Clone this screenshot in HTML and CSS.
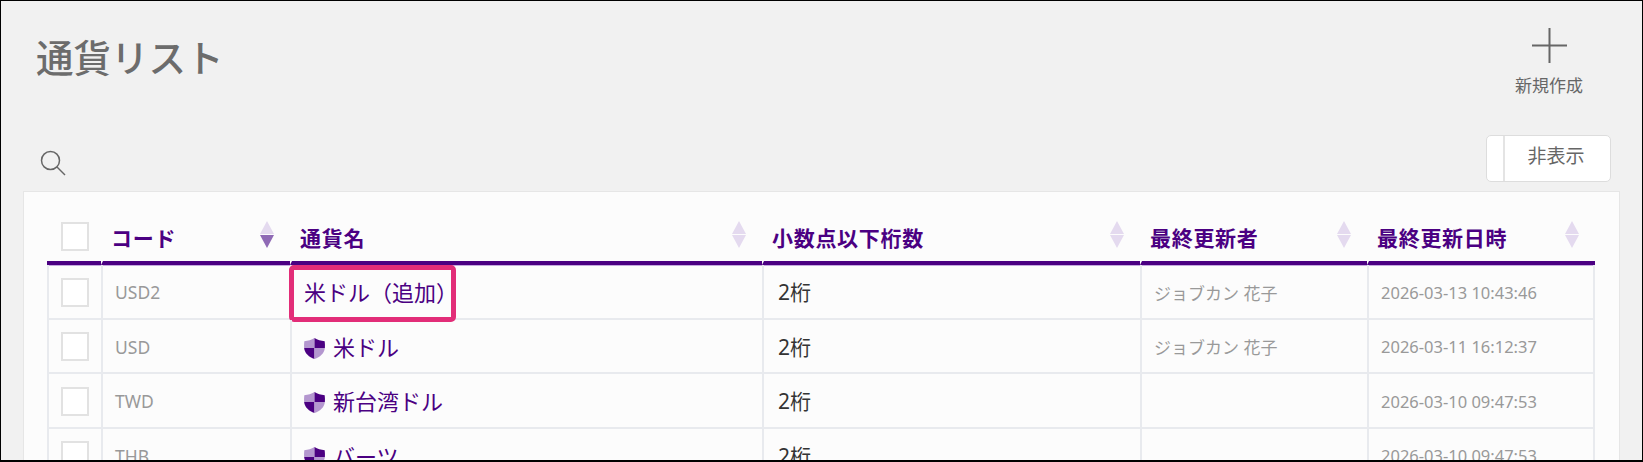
FILE: index.html
```html
<!DOCTYPE html>
<html lang="ja">
<head>
    <meta charset="utf-8">
    <title>通貨リスト</title>
    <link rel="stylesheet" href="styles.css">
</head>
<body>
<div class="frame">
    <header class="page-head">
        <h1 class="page-title">通貨リスト</h1>
        <a class="new-btn">
            <svg class="new-icon" width="35" height="35" viewBox="0 0 35 35"><path d="M17.5 0V35M0 17.5H35" fill="none" stroke="#666" stroke-width="2"/></svg>
            <span>新規作成</span>
        </a>
    </header>

    <div class="toolbar">
        <svg class="search-icon" width="26" height="26" viewBox="0 0 26 26"><circle cx="10.5" cy="10.5" r="9" fill="none" stroke="#666" stroke-width="1.5"/><path d="M17 17L25 25" fill="none" stroke="#666" stroke-width="1.5"/></svg>
        <div class="toggle-btn">
            <span class="toggle-knob"></span>
            <span class="toggle-text">非表示</span>
        </div>
    </div>

    <div class="card">
        <table class="list">
            <colgroup>
                <col class="col-check">
                <col class="col-code">
                <col class="col-name">
                <col class="col-digit">
                <col class="col-user">
                <col class="col-date">
            </colgroup>
            <thead>
            <tr>
                <th class="check-cell"><span class="checkbox"></span></th>
                <th><div class="th-in"><span>コード</span><span class="sort sort-asc"></span></div></th>
                <th><div class="th-in"><span>通貨名</span><span class="sort"></span></div></th>
                <th><div class="th-in"><span>小数点以下桁数</span><span class="sort"></span></div></th>
                <th><div class="th-in"><span>最終更新者</span><span class="sort"></span></div></th>
                <th><div class="th-in"><span>最終更新日時</span><span class="sort"></span></div></th>
            </tr>
            </thead>
            <tbody>
            <tr>
                <td class="check-cell"><span class="checkbox"></span></td>
                <td class="muted code">USD2</td>
                <td class="name"><span class="mark-box"></span>米ドル（追加）</td>
                <td class="digit">2桁</td>
                <td class="muted">ジョブカン 花子</td>
                <td class="muted date">2026-03-13 10:43:46</td>
            </tr>
            <tr>
                <td class="check-cell"><span class="checkbox"></span></td>
                <td class="muted code">USD</td>
                <td class="name"><svg class="shield" width="21" height="21" viewBox="0 0 21 23" preserveAspectRatio="none"><path d="M10.500 0C7.500 2 4 3.200 .3 3.500C0 6 0 8.500 .1 11H10.500Z" fill="#b497cf"/><path d="M10.500 0C13.500 2 17 3.200 20.700 3.500C21 6 21 8.500 20.900 11H10.500Z" fill="#4b0082"/><path d="M.1 11H10.500V23C5 21 .8 17 .1 11Z" fill="#4b0082"/><path d="M20.900 11H10.500V23C16 21 20.200 17 20.900 11Z" fill="#b497cf"/></svg>米ドル</td>
                <td class="digit">2桁</td>
                <td class="muted">ジョブカン 花子</td>
                <td class="muted date">2026-03-11 16:12:37</td>
            </tr>
            <tr>
                <td class="check-cell"><span class="checkbox"></span></td>
                <td class="muted code">TWD</td>
                <td class="name"><svg class="shield" width="21" height="21" viewBox="0 0 21 23" preserveAspectRatio="none"><path d="M10.500 0C7.500 2 4 3.200 .3 3.500C0 6 0 8.500 .1 11H10.500Z" fill="#b497cf"/><path d="M10.500 0C13.500 2 17 3.200 20.700 3.500C21 6 21 8.500 20.900 11H10.500Z" fill="#4b0082"/><path d="M.1 11H10.500V23C5 21 .8 17 .1 11Z" fill="#4b0082"/><path d="M20.900 11H10.500V23C16 21 20.200 17 20.900 11Z" fill="#b497cf"/></svg>新台湾ドル</td>
                <td class="digit">2桁</td>
                <td class="muted"></td>
                <td class="muted date">2026-03-10 09:47:53</td>
            </tr>
            <tr>
                <td class="check-cell"><span class="checkbox"></span></td>
                <td class="muted code">THB</td>
                <td class="name"><svg class="shield" width="21" height="21" viewBox="0 0 21 23" preserveAspectRatio="none"><path d="M10.500 0C7.500 2 4 3.200 .3 3.500C0 6 0 8.500 .1 11H10.500Z" fill="#b497cf"/><path d="M10.500 0C13.500 2 17 3.200 20.700 3.500C21 6 21 8.500 20.900 11H10.500Z" fill="#4b0082"/><path d="M.1 11H10.500V23C5 21 .8 17 .1 11Z" fill="#4b0082"/><path d="M20.900 11H10.500V23C16 21 20.200 17 20.900 11Z" fill="#b497cf"/></svg>バーツ</td>
                <td class="digit">2桁</td>
                <td class="muted"></td>
                <td class="muted date">2026-03-10 09:47:53</td>
            </tr>
            </tbody>
        </table>
    </div>
</div>
</body>
</html>
```

FILE: styles.css
```css
*{
    padding: 0;
    margin: 0;
    box-sizing: border-box;
}

html,body{
    height: 100%;
    overflow: hidden;
}

body{
    font-family: "Noto Sans", "Noto Sans CJK JP", sans-serif;
    color: #333;
    text-spacing-trim: space-all;
}

.frame{
    height: 462px;
    overflow: hidden;
    background-color: #f1f1f1;
    border: 1px solid #000;
    border-bottom-width: 2px;
}

.page-head{
    display: flex;
    justify-content: space-between;
    align-items: flex-start;
    height: 134px;
    padding-left: 35px;
}

.page-title{
    margin-top: 27px;
    font-size: 37.500px;
    font-weight: 500;
    line-height: 60px;
    color: #6c6c6c;
}

.new-btn{
    display: flex;
    flex-direction: column;
    align-items: center;
    width: 70px;
    margin: 27px 58px 0 0;
    font-size: 17px;
    line-height: 24px;
    color: #666;
}

.new-icon{
    margin-bottom: 11px;
}

.toolbar{
    display: flex;
    justify-content: space-between;
    align-items: flex-start;
    height: 56px;
    padding: 0 31px 0 39px;
}

.search-icon{
    margin-top: 15px;
}

.toggle-btn{
    display: flex;
    width: 125px;
    height: 47px;
    background-color: #fff;
    border: 1px solid #ddd;
    border-radius: 5px;
}

.toggle-knob{
    width: 18px;
    border-right: 2px solid #e4e4e4;
}

.toggle-text{
    flex: 1;
    text-align: center;
    font-size: 19px;
    line-height: 41px;
    color: #666;
    padding-right: 3px;
}

.card{
    width: 1597px;
    height: 300px;
    margin-left: 22px;
    padding: 16px 24px 0;
    background-color: #fcfcfc;
    border: 1px solid #e6e6e6;
}

.list{
    width: 1548px;
    margin-left: -1px;
    table-layout: fixed;
    border-collapse: separate;
    border-spacing: 0;
}

.col-check{ width: 54px; }
.col-code{ width: 189px; }
.col-name{ width: 472px; }
.col-digit{ width: 378px; }
.col-user{ width: 227px; }
.col-date{ width: 228px; }

.list th{
    height: 57px;
    padding: 4px 16px 0 8px;
    border-bottom: 4px solid #4b0082;
    text-align: left;
    font-size: 21px;
    font-weight: 700;
    letter-spacing: .7px;
    color: #4b0082;
    box-shadow: 0 1px 0 #c5a9dd;
}

.list th + th{
    border-left: 2px solid #fcfcfc;
}

.th-in{
    display: flex;
    justify-content: space-between;
    align-items: center;
}

.list td{
    height: 54.500px;
    padding: 0 12px;
    border-bottom: 2px solid #e8eaee;
    border-left: 2px solid #e8eaee;
    font-size: 21px;
}

.list td:last-child{
    border-right: 2px solid #e8eaee;
}

.list td.check-cell{
    padding: 2px 0 0 12px;
}

.list th.check-cell{
    padding-left: 14px;
}

.checkbox{
    display: block;
    width: 28px;
    height: 29px;
    background-color: #fff;
    border: 2px solid #e2e2e2;
}

.list .muted{
    padding-top: 2px;
    font-size: 17px;
    color: #999;
}

.list .code{
    font-size: 17.500px;
}

.list .date{
    font-size: 16.500px;
}

.list .digit{
    padding-left: 14px;
}

.list .name{
    position: relative;
    font-size: 22px;
    color: #4b0082;
}

.shield{
    margin-right: 8px;
    vertical-align: -3px;
}

.mark-box{
    position: absolute;
    left: -3px;
    top: 0;
    width: 167px;
    height: 57px;
    border: 5px solid #e22d78;
    border-radius: 5px;
}

/* 上下の三角で並び替えを表す */
.sort{
    display: block;
    flex: none;
    width: 14px;
    margin-top: -4px;
}

.sort::before,
.sort::after{
    content: "";
    display: block;
    border-left: 7px solid transparent;
    border-right: 7px solid transparent;
}

.sort::before{
    border-bottom: 13px solid #e4daef;
    margin-bottom: 1px;
}

.sort::after{
    border-top: 13px solid #e4daef;
}

.sort-asc::after{
    border-top-color: #8f6ab5;
}
```
